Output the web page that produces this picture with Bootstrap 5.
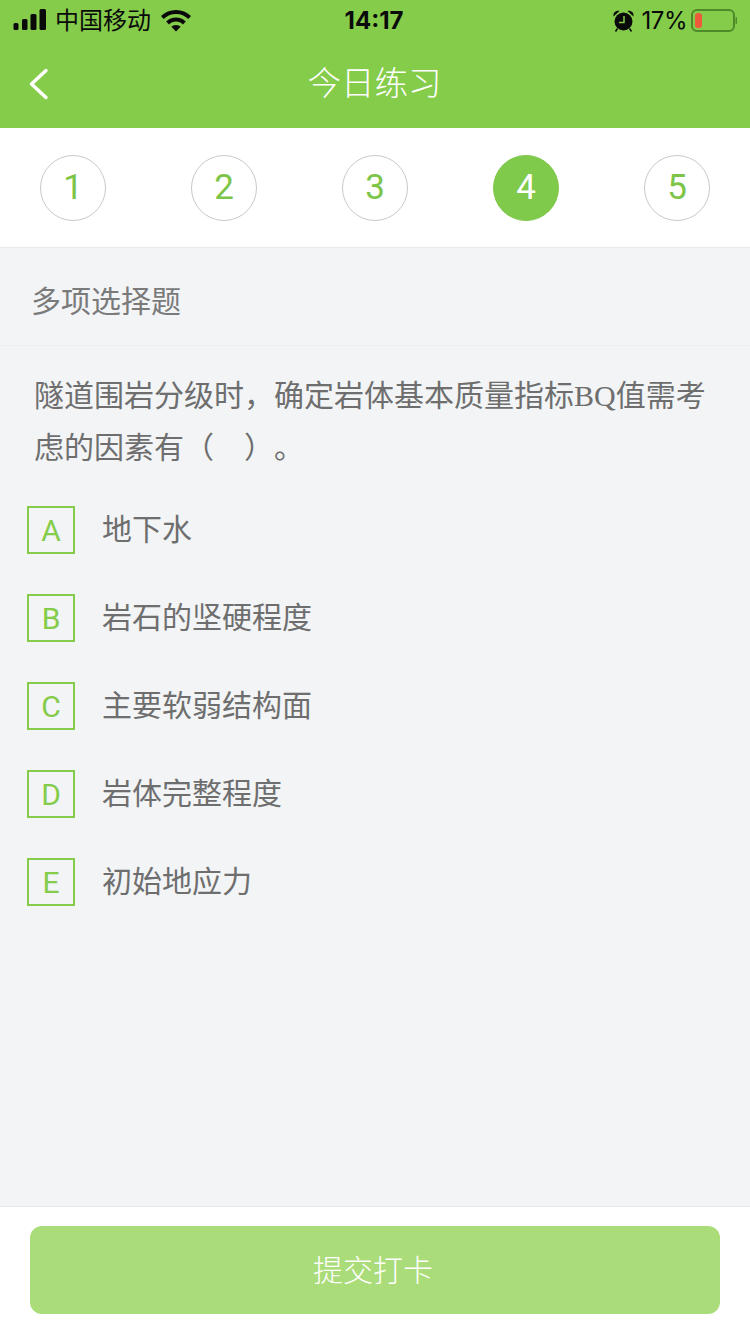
<!DOCTYPE html>
<html lang="zh-CN">
<head>
  <meta charset="UTF-8">
  <title>今日练习</title>
  <link href="https://cdn.jsdelivr.net/npm/bootstrap@5.3.0/dist/css/bootstrap.min.css" rel="stylesheet">
  <style>
    body {
      background: #f2f4f6;
      font-family: "Liberation Sans", "Noto Sans CJK SC", sans-serif;
      color: #757575;
      text-spacing-trim: space-all;
    }
    .page-wrap { min-height: 1334px; }
    .top-green { background: #85cc4a; height: 128px; }
    .status-row {
      height: 40px;
      padding: 1px 13px 0;
      display: grid;
      grid-template-columns: 1fr auto 1fr;
      align-items: center;
      color: #0a0a0a;
      font-size: 24px;
    }
    .status-time { font-weight: 700; font-family: "Inter", "Liberation Sans", sans-serif; font-size: 24px; margin-left: -2px; }
    .status-pct { font-family: "Inter", "Liberation Sans", sans-serif; font-size: 24px; letter-spacing: -.5px; margin-left: 8px; }
    .status-wifi { margin-left: 10px; }
    .head-row {
      height: 88px;
      display: grid;
      grid-template-columns: 1fr auto 1fr;
      align-items: center;
      color: #fff;
    }
    .head-back { margin-left: 29px; }
    .head-title { font-size: 33.5px; font-weight: 300; line-height: 1; margin-top: -1px; margin-left: -1px; }
    .step-bar {
      height: 120px;
      padding: 0 40px 0;
      background: #fff;
      border-bottom: 1px solid #e8e9ea;
    }
    .step-dot {
      width: 66px;
      height: 66px;
      border: 1px solid #c9c9c9;
      border-radius: 50%;
      color: #7cc548;
      font-size: 35px;
      font-family: "Roboto", "Liberation Sans", sans-serif;
      line-height: 1;
    }
    .step-dot.is-on { background: #7fc94b; border-color: #7fc94b; color: #fff; }
    .type-row {
      height: 98px;
      padding: 10px 31px 0;
      font-size: 30px;
      line-height: 1;
      color: #7a7a7a;
      border-bottom: 1px solid #eceef0;
    }
    .q-text {
      padding: 24px 34px 0;
      margin: 0 0 32px;
      font-size: 30px;
      line-height: 52px;
      color: #6e6e6e;
    }
    .q-text .latin { font-family: "Liberation Serif", serif; }
    .opt-list { padding: 0 27px; gap: 40px; }
    .opt-key {
      width: 48px;
      height: 48px;
      border: 2px solid #85cc4a;
      color: #85cc4a;
      font-size: 30px;
      font-family: "Roboto", "Liberation Sans", sans-serif;
      line-height: 1;
      padding-top: 2px;
    }
    .opt-text { font-size: 30px; line-height: 1; color: #6e6e6e; margin-top: -1px; margin-left: 27px; }
    .foot-bar {
      background: #fff;
      border-top: 1px solid #e6e8ea;
      padding: 19px 30px 20px;
    }
    .btn-submit {
      height: 88px;
      padding: 0 4px 0 0;
      background: #aadc79;
      border: 0;
      border-radius: 12px;
      color: #fff;
      font-size: 30px;
      font-weight: 300;
      opacity: 1;
    }
    .btn-submit:hover, .btn-submit:disabled { background: #aadc79; color: #fff; opacity: 1; }
  </style>
</head>
<body>
  <div class="page-wrap d-flex flex-column">
    <div class="top-green">
      <div class="status-row">
        <div class="d-flex align-items-center">
          <svg width="34" height="24" viewBox="0 0 34 24" fill="#0a0a0a">
            <rect x="0.5" y="14" width="5" height="7" rx="1.5"/>
            <rect x="9" y="10" width="5.5" height="11" rx="1.5"/>
            <rect x="17.5" y="5" width="6" height="16" rx="1.5"/>
            <rect x="26.5" y="0" width="6.5" height="21" rx="1.5"/>
          </svg>
          <span class="ms-2">中国移动</span>
          <svg class="status-wifi" width="30" height="22" viewBox="0 0 30 22" fill="#0a0a0a">
            <path d="M15 0C9.200 0 4 2.200 0 6l2.700 3C5.900 5.900 10.200 4 15 4s9.100 1.900 12.300 5L30 6C26 2.200 20.800 0 15 0z"/>
            <path d="M15 7.500c-3.800 0-7.200 1.500-9.800 3.900l2.800 3c1.800-1.700 4.300-2.800 7-2.800s5.200 1.100 7 2.800l2.800-3c-2.600-2.400-6-3.900-9.800-3.900z"/>
            <path d="M15 15c-1.800 0-3.400.7-4.600 1.800L15 21.500l4.600-4.700C18.400 15.700 16.800 15 15 15z"/>
          </svg>
        </div>
        <div class="status-time">14:17</div>
        <div class="d-flex align-items-center justify-content-end">
          <svg width="21" height="22" viewBox="0 0 21 22" fill="#0a0a0a">
            <circle cx="10.500" cy="11.500" r="9"/>
            <path d="M.5 6.500C0 2.500 2.800.2 6.500 1zM20.500 6.500C21 2.500 18.200.2 14.500 1z"/>
            <path d="M4.500 18.500l-2 3M16.500 18.500l2 3" stroke="#0a0a0a" stroke-width="1.500"/>
            <path d="M11 6v6.500H6" fill="none" stroke="#85cc4a" stroke-width="1.500"/>
          </svg>
          <span class="status-pct">17%</span>
          <svg class="ms-1" width="46" height="24" viewBox="0 0 46 24">
            <rect x="1" y="1" width="42" height="21" rx="5" fill="none" stroke="#4e8a2a" stroke-width="2"/>
            <rect x="4" y="4" width="7" height="15" rx="3" fill="#ee5b3a"/>
            <rect x="44.500" y="8" width="1.500" height="7" rx=".7" fill="#4e8a2a"/>
          </svg>
        </div>
      </div>
      <div class="head-row">
        <svg class="head-back" width="20" height="32" viewBox="0 0 20 32" fill="none" stroke="#fff" stroke-width="3.500" stroke-linecap="round" stroke-linejoin="round">
          <path d="M17 2.500 2.500 16 17 29.500"/>
        </svg>
        <div class="head-title">今日练习</div>
        <div></div>
      </div>
    </div>

    <div class="step-bar d-flex justify-content-between align-items-center">
      <div class="step-dot d-flex align-items-center justify-content-center">1</div>
      <div class="step-dot d-flex align-items-center justify-content-center">2</div>
      <div class="step-dot d-flex align-items-center justify-content-center">3</div>
      <div class="step-dot is-on d-flex align-items-center justify-content-center">4</div>
      <div class="step-dot d-flex align-items-center justify-content-center">5</div>
    </div>

    <div class="flex-grow-1">
      <div class="type-row d-flex align-items-center">多项选择题</div>
      <p class="q-text">隧道围岩分级时，确定岩体基本质量指标<span class="latin">BQ</span>值需考<br>虑的因素有（&emsp;）。</p>
      <div class="opt-list d-flex flex-column">
        <div class="d-flex align-items-center">
          <div class="opt-key d-flex align-items-center justify-content-center">A</div>
          <div class="opt-text">地下水</div>
        </div>
        <div class="d-flex align-items-center">
          <div class="opt-key d-flex align-items-center justify-content-center">B</div>
          <div class="opt-text">岩石的坚硬程度</div>
        </div>
        <div class="d-flex align-items-center">
          <div class="opt-key d-flex align-items-center justify-content-center">C</div>
          <div class="opt-text">主要软弱结构面</div>
        </div>
        <div class="d-flex align-items-center">
          <div class="opt-key d-flex align-items-center justify-content-center">D</div>
          <div class="opt-text">岩体完整程度</div>
        </div>
        <div class="d-flex align-items-center">
          <div class="opt-key d-flex align-items-center justify-content-center">E</div>
          <div class="opt-text">初始地应力</div>
        </div>
      </div>
    </div>

    <div class="foot-bar">
      <button type="button" class="btn btn-submit w-100" disabled>提交打卡</button>
    </div>
  </div>
  <script src="https://cdn.jsdelivr.net/npm/bootstrap@5.3.0/dist/js/bootstrap.bundle.min.js"></script>
</body>
</html>
